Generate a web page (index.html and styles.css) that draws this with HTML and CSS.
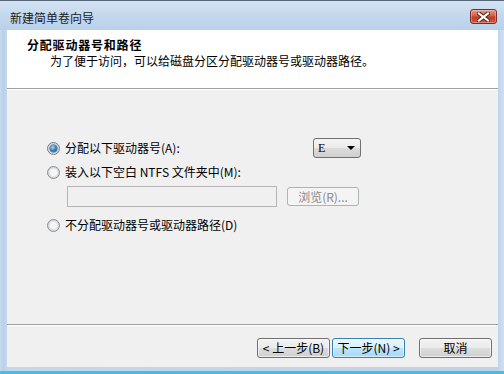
FILE: index.html
```html
<!DOCTYPE html>
<html lang="zh-CN">
<head>
<meta charset="utf-8">
<title>新建简单卷向导</title>
<link rel="stylesheet" href="styles.css">
</head>
<body>
<div class="window">
  <div class="titlebar">
    <span class="title">新建简单卷向导</span>
    <div class="close">
      <svg width="13" height="10" viewBox="0 0 13 10">
        <path d="M2 1.5 L11 8.5 M11 1.5 L2 8.5" stroke="#5a1a12" stroke-width="4" stroke-linecap="square"/>
        <path d="M2 1.5 L11 8.5 M11 1.5 L2 8.5" stroke="#ffffff" stroke-width="2.2" stroke-linecap="square"/>
      </svg>
    </div>
  </div>
  <div class="client">
    <div class="header">
      <div class="h-title">分配驱动器号和路径</div>
      <div class="h-sub">为了便于访问，可以给磁盘分区分配驱动器号或驱动器路径。</div>
    </div>
    <div class="sep"></div>
    <div class="body">
      <div class="options">
        <div class="row row1">
          <div class="opt"><span class="radio checked"></span><span>分配以下驱动器号(A):</span></div>
          <div class="combo"><span class="combo-val">E</span><span class="arrow"></span></div>
        </div>
        <div class="row row2">
          <div class="opt"><span class="radio"></span><span>装入以下空白 NTFS 文件夹中(M):</span></div>
        </div>
        <div class="row row3">
          <div class="textbox"></div>
          <div class="btn disabled browse">浏览(R)...</div>
        </div>
        <div class="row row4">
          <div class="opt"><span class="radio"></span><span>不分配驱动器号或驱动器路径(D)</span></div>
        </div>
      </div>
    </div>
    <div class="sep"></div>
    <div class="footer">
      <div class="btn">&lt; 上一步(B)</div>
      <div class="btn default">下一步(N) &gt;</div>
      <div class="btn cancel">取消</div>
    </div>
  </div>
  <div class="bottom-frame"></div>
</div>
</body>
</html>
```

FILE: styles.css
```css
* { box-sizing: border-box; }
html, body {
  margin: 0;
  padding: 0;
  width: 504px;
  height: 374px;
  overflow: hidden;
  background: #bcd3ea;
}
body {
  font-family: "Noto Sans CJK SC", "DejaVu Sans", sans-serif;
  font-size: 12px;
  color: #000;
}
.window {
  width: 504px;
  height: 374px;
  display: flex;
  flex-direction: column;
  border-top: 1px solid #56677a;
  background: linear-gradient(90deg, #c9dcf0 0px, #b9d0ea 3px, #c4d8ee 7px, #bcd3ea 497px, #cfe0f2 504px);
}
.titlebar {
  height: 29px;
  flex: none;
  display: flex;
  align-items: center;
  padding: 4px 7px 0 10px;
  background: linear-gradient(#d3e3f4, #c0d6ed 60%, #bad1ea);
}
.title {
  line-height: 14px;
  color: #1a1a1a;
}
.close {
  margin-left: auto;
  width: 27px;
  height: 15px;
  margin-top: -2px;
  border: 1px solid #7b2d24;
  border-radius: 3px;
  background: linear-gradient(#e49a89, #d0604a 45%, #c23a22 55%, #cf5a40);
  display: flex;
  align-items: center;
  justify-content: center;
  box-shadow: inset 0 0 0 1px rgba(255,255,255,0.3);
}
.client {
  flex: none;
  height: 337px;
  margin: 0 6px 0 7px;
  display: flex;
  flex-direction: column;
  background: #f0f0f0;
}
.header {
  height: 58px;
  flex: none;
  background: #fff;
  padding: 7px 0 0 20px;
}
.h-title {
  font-weight: bold;
  line-height: 16px;
  letter-spacing: 0.8px;
}
.h-sub {
  line-height: 16px;
  padding-left: 23px;
}
.sep {
  height: 2px;
  flex: none;
  border-top: 1px solid #a0a0a0;
  border-bottom: 1px solid #ffffff;
}
.body {
  height: 234px;
  flex: none;
  padding: 48px 0 0 40px;
}
.options {
  width: 314px;
  display: flex;
  flex-direction: column;
}
.row {
  display: flex;
  align-items: center;
}
.row1 { height: 20px; justify-content: space-between; }
.row2 { height: 16px; margin-top: 6px; }
.row3 { height: 21px; margin-top: 6px; padding-left: 20px; gap: 10px; }
.row4 { height: 16px; margin-top: 10px; }
.opt {
  display: flex;
  align-items: center;
  gap: 5px;
  line-height: 14px;
}
.radio {
  width: 13px;
  height: 13px;
  border-radius: 50%;
  border: 1px solid #8a8e92;
  background: radial-gradient(circle at 50% 50%, #f6f6f6 0, #f6f6f6 3px, #d6d8da 5px, #eceeef 6px);
  position: relative;
  flex: none;
}
.radio.checked {
  border-color: #6f7f8c;
}
.radio.checked::after {
  content: "";
  position: absolute;
  left: 2px;
  top: 2px;
  width: 7px;
  height: 7px;
  border-radius: 50%;
  background: radial-gradient(circle at 40% 35%, #a8dcf6 0, #3a88bf 45%, #14507f 100%);
  box-shadow: 0 0 0 0.5px #244f72;
}
.combo {
  width: 48px;
  height: 20px;
  border: 1px solid #707070;
  border-radius: 3px;
  background: linear-gradient(#f4f4f4, #ebebeb 50%, #dcdcdc 51%, #cfcfcf);
  display: flex;
  align-items: center;
  padding: 0 5px 0 4px;
  justify-content: space-between;
}
.combo-val {
  font-family: "Liberation Serif", serif;
  font-size: 12px;
  line-height: 14px;
}
.arrow {
  width: 0;
  height: 0;
  border-left: 4px solid transparent;
  border-right: 4px solid transparent;
  border-top: 4px solid #000;
}
.textbox {
  width: 210px;
  height: 21px;
  border: 1px solid #b5b5b5;
  background: #f0f0f0;
}
.btn {
  width: 73px;
  height: 20px;
  border: 1px solid #707070;
  border-radius: 3px;
  background: linear-gradient(#f2f2f2, #ebebeb 50%, #dddddd 51%, #cfcfcf);
  box-shadow: inset 0 0 0 1px rgba(255,255,255,0.6);
  display: flex;
  align-items: center;
  justify-content: center;
  line-height: 14px;
  flex: none;
}
.btn.disabled {
  border-color: #adb2b5;
  background: #f4f4f4;
  color: #8a8a8a;
  box-shadow: none;
}
.browse {
  width: 72px;
  height: 19px;
}
.btn.default {
  border-color: #3c7fb1;
  background: linear-gradient(#eaf6fd, #d9f0fc 50%, #bee6fd 51%, #a7d9f5);
  box-shadow: inset 0 0 0 1px rgba(255,255,255,0.5);
}
.footer {
  height: 41px;
  flex: none;
  display: flex;
  justify-content: flex-end;
  padding: 12px 6px 0 0;
  gap: 2px;
}
.cancel {
  margin-left: 12px;
}
.bottom-frame {
  flex: none;
  height: 7px;
  border-bottom: 3px solid #44bfe0;
}
```
